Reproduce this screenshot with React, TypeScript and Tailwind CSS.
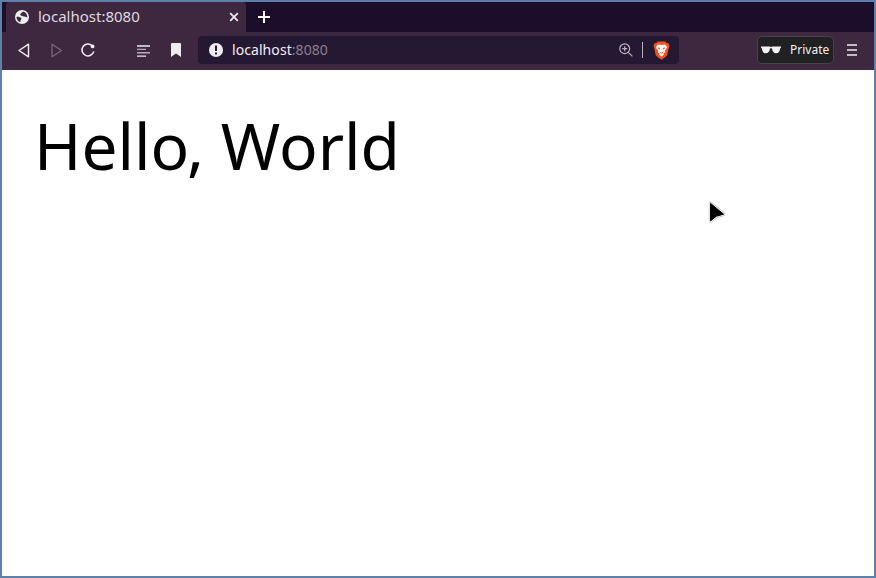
import React from "react";

function GlobeIcon() {
  return (
    <svg width="14" height="14" viewBox="0 0 14 14">
      <circle cx="7" cy="7" r="7" fill="#f1eef2" />
      <path d="M8 1.4 C7 3.2 5.2 2.8 5.2 4.6 C5.2 6 7.2 5.6 8.6 6.4 C9.4 7 10.6 6.2 12.4 7.4 C12.6 4.6 10.8 2 8 1.4Z" fill="#3e2840" />
      <path d="M1.5 6.8 C3.4 6.8 5.6 7 6.4 8.2 C7 9.4 5.2 9.6 5.4 12.3 C3 11.6 1.4 9.4 1.5 6.8Z" fill="#3e2840" />
    </svg>
  );
}

function BraveIcon() {
  return (
    <svg width="17" height="19" viewBox="0 0 17 19">
      <path d="M4.8 .4 H12.2 L13.7 2 L15.4 2.3 L16.5 4.4 L16 6 L14.3 14 L12.8 15.8 L8.5 18.7 L4.2 15.8 L2.7 14 L1 6 L.5 4.4 L1.6 2.3 L3.3 2Z" fill="#f4511e" />
      <path d="M5 3.4 L8.5 4 L12 3.4 L14 6 L13.5 7.4 L11.7 9.8 L12.2 11.2 L10.4 12.5 L11 13.5 L8.5 15.4 L6 13.5 L6.6 12.5 L4.8 11.2 L5.3 9.8 L3.5 7.4 L3 6Z" fill="#fff" />
      <path d="M4.6 6.3 L7.2 7 L7 8.5 L5.7 8Z M12.4 6.3 L9.8 7 L10 8.5 L11.3 8Z M6.2 10.5 L8.5 11.7 L10.8 10.5 L9.6 12.2 L8.5 12.6 L7.4 12.2Z" fill="#f4511e" />
    </svg>
  );
}

export default function App() {
  return (
    <div className="relative flex h-[578px] w-[876px] flex-col overflow-hidden border-2 border-[#5e81ac] bg-white font-['Noto_Sans',sans-serif]">
      <header className="shrink-0">
        <div className="flex h-[30px] bg-[#1c0d2b] pl-1">
          <div className="flex w-[240px] items-center rounded-t-[3px] bg-[#3e2840] pl-[9px] pr-[7px]">
            <GlobeIcon />
            <span className="mb-[2px] ml-[9px] flex-1 text-[15px] leading-[20px] text-[#dfd9e0]">localhost:8080</span>
            <svg width="10" height="10" viewBox="0 0 10 10" fill="none" stroke="#eeeaf0" strokeWidth="1.8">
              <path d="M1.2 1.2 8.8 8.8M8.8 1.2 1.2 8.8" />
            </svg>
          </div>
          <div className="flex w-9 items-center justify-center">
            <svg width="12" height="12" viewBox="0 0 12 12" stroke="#fff" strokeWidth="2">
              <path d="M6 0V12M0 6H12" />
            </svg>
          </div>
        </div>

        <nav className="flex h-[38px] items-center bg-[#3e2840] pb-[2px]">
          <svg className="ml-4 shrink-0" width="12" height="15" viewBox="0 0 12 15" fill="none" stroke="#f0edf1" strokeWidth="1.4" strokeLinejoin="round">
            <path d="M10.5 1.2V13.8L1 7.5Z" />
          </svg>
          <svg className="ml-[21px] shrink-0" width="12" height="15" viewBox="0 0 12 15" fill="none" stroke="#77667a" strokeWidth="1.3" strokeLinejoin="round">
            <path d="M1 1.2V13.8L10.5 7.5Z" />
          </svg>
          <svg className="ml-[17px] shrink-0" width="16" height="16" viewBox="0 0 16 16" fill="none" stroke="#f0edf1" strokeWidth="1.5">
            <path d="M12.2 3.6A6 6 0 1 0 13.8 9.4" />
            <circle cx="12.6" cy="4.4" r="1.9" fill="#f0edf1" stroke="none" />
          </svg>
          <svg className="ml-[41px] mt-[2px] shrink-0" width="13" height="12" viewBox="0 0 13 12" strokeWidth="1.4">
            <path d="M0 1H13M0 11.1H9" stroke="#efecef" />
            <path d="M0 4.4H9M0 7.7H13" stroke="#b5abb6" />
          </svg>
          <svg className="ml-[21px] shrink-0" width="10" height="14" viewBox="0 0 10 14">
            <path d="M1 0H9Q10 0 10 1V14L5 10.5L0 14V1Q0 0 1 0Z" fill="#efecef" />
          </svg>
          <div className="ml-[17px] flex h-7 w-[481px] items-center rounded-[4px] bg-[#251833] pl-[11px] pr-[9px]">
            <svg width="14" height="14" viewBox="0 0 14 14">
              <circle cx="7" cy="7" r="7" fill="#f0edf1" />
              <path d="M6 2.5H8V8H6ZM6 9.5H8V11.5H6Z" fill="#251833" />
            </svg>
            <span className="ml-[9px] flex-1 text-[14px] leading-[20px] tracking-[0.07px] text-[#f2eff3]">
              localhost<span className="text-[#88818d]">:8080</span>
            </span>
            <svg width="14" height="14" viewBox="0 0 14 14" fill="none" stroke="#bbb5c0" strokeWidth="1.2">
              <circle cx="5.7" cy="5.7" r="4.9" />
              <path d="M9.3 9.3 13.4 13.4M3.2 5.7H8.2M5.7 3.2V8.2" />
            </svg>
            <span className="ml-[9px] h-4 w-px bg-[#b7b1bb]" />
            <span className="ml-[10px]"><BraveIcon /></span>
          </div>
          <div className="ml-[78px] flex h-7 w-[77px] items-center rounded-[5px] border border-[#49424b] bg-[#212023] pl-[3px]">
            <svg width="20" height="8" viewBox="0 0 20 8">
              <path d="M0 .5H8.5Q10 1.3 11.5 .5H20V1.8L19.2 2.2Q18.8 7.3 15 7.3Q11.8 7.3 11 2.6Q10 1.8 9 2.6Q8.2 7.3 5 7.3Q1.2 7.3 .8 2.2L0 1.8Z" fill="#f3f3f3" />
            </svg>
            <span className="ml-[9px] text-[12px] leading-4 text-[#f2f2f2]">Private</span>
          </div>
          <div className="ml-[13px] flex w-[10px] flex-col gap-[3px]">
            <span className="h-[2px] bg-[#c2bac3]" />
            <span className="h-[2px] bg-[#c2bac3]" />
            <span className="h-[2px] bg-[#c2bac3]" />
          </div>
        </nav>
      </header>

      <main className="flex-1 pl-8 pt-[44px]">
        <h1 className="text-[64px] font-normal leading-none text-black">
          Hell<span className="tracking-[-2.4px]">o</span>, World
        </h1>
      </main>

      <svg className="absolute left-[706px] top-[198px]" width="19" height="25" viewBox="0 0 19 25">
        <path d="M2.6 3.4V20.8L8.4 16.2L15.6 14.2Z" fill="#000" stroke="#b9b9b9" strokeWidth="3.6" strokeLinejoin="round" />
        <path d="M2.6 3.4V20.8L8.4 16.2L15.6 14.2Z" fill="#000" stroke="#fff" strokeWidth="2.4" strokeLinejoin="round" />
        <path d="M2.6 3.4V20.8L8.4 16.2L15.6 14.2Z" fill="#000" stroke="#000" strokeWidth="1" strokeLinejoin="round" />
      </svg>
    </div>
  );
}
